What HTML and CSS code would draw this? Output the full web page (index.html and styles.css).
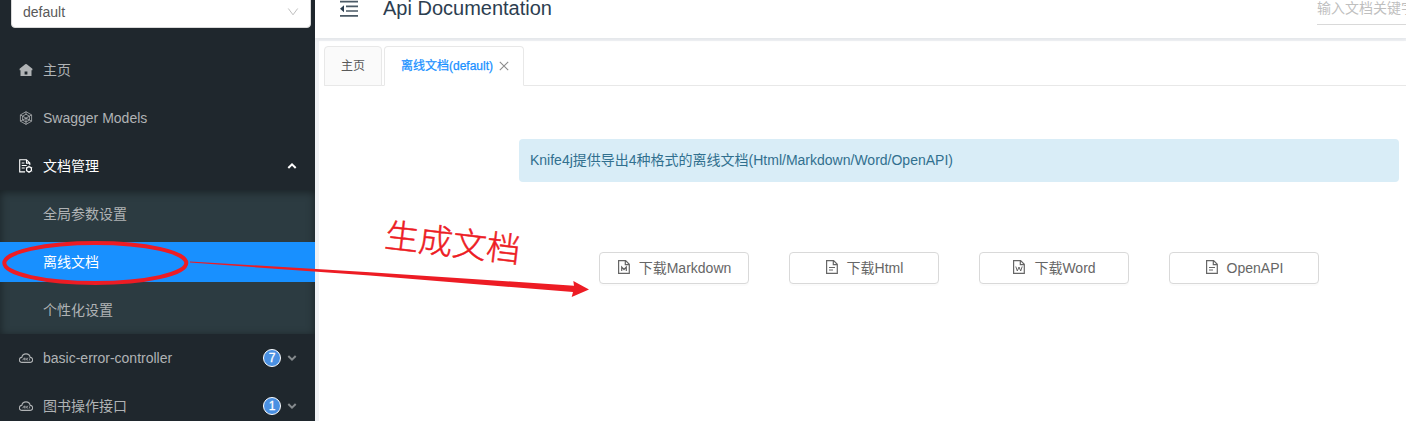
FILE: index.html
```html
<!DOCTYPE html>
<html lang="zh-CN">
<head>
<meta charset="utf-8">
<title>Api Documentation</title>
<link rel="stylesheet" href="styles.css">
</head>
<body>
<svg class="defs" width="0" height="0">
  <symbol id="cloud" viewBox="0 0 14 14"><path d="M3 11.400a2.500 2.500 0 0 1-.2-5C3.200 4 4.900 2.900 7 2.900s3.800 1.100 4.200 3.500a2.500 2.500 0 0 1-.2 5z" fill="none" stroke="currentColor" stroke-width="1.100"/><path d="M3.600 9.200l1.800-2.400v2.600M6.900 6.800v2.600M9.200 6.900 7.300 8.200l1.900 1.200M10.600 7.400v2" fill="none" stroke="currentColor" stroke-width=".8"/></symbol>
  <symbol id="down" viewBox="0 0 10 8"><path d="M1.300 2 5 5.700 8.700 2" fill="none" stroke="currentColor" stroke-width="2"/></symbol>
  <symbol id="file" viewBox="0 0 14 16"><path d="M1.600 1.600h7l3.700 3.700v9.100H1.600zM8.300 1.600v4h4" fill="none" stroke="currentColor" stroke-width="1.200"/></symbol>
</svg>
<div class="layout">
  <aside class="sidebar">
    <div class="select"><span>default</span>
      <svg width="12" height="12" viewBox="0 0 12 12"><path d="M1.300 2.500 6 8.800l4.700-6.300" fill="none" stroke="#bfbfbf"/></svg>
    </div>
    <nav class="menu">
      <div class="item"><svg class="icon" viewBox="0 0 14 14"><path fill-rule="evenodd" d="M7 .9Q6.600.9 6.200 1.300L.6 5.800v1.400h.9V13h11V7.200h.9V5.800L7.800 1.300Q7.400.9 7 .9zM5.600 8.500h2.800v3H5.600z" fill="currentColor"/></svg><span>主页</span></div>
      <div class="item"><svg class="icon" viewBox="0 0 14 14"><path d="M7 .7l5.600 3.200v6.300L7 13.400l-5.600-3.200V3.900zM7 3.200l3.400 2v3.900L7 11 3.600 9.100V5.200zM7 .7v2.500M1.400 3.900l9 5.200M12.600 3.900l-9 5.200M7 6.900v6.500M3.600 9.100l-2.200 1.100M10.400 9.100l2.200 1.100" fill="none" stroke="currentColor" stroke-width=".8"/></svg><span>Swagger Models</span></div>
      <div class="item open"><svg class="icon" viewBox="0 0 14 14"><path d="M6 12.900H.7V.7h6.800l3.300 3.300v2M7.500.7v3.400h3.300M2.700 4h2.700M2.700 6.500h5M2.700 9h3" fill="none" stroke="currentColor" stroke-width="1.100"/><circle cx="10" cy="10.300" r="2.500" fill="none" stroke="currentColor" stroke-width="1.200"/><path d="M10 6.700v1.300M10 12.600v1.300M6.900 8.500l1.100.7M12 11.400l1.200.7M13.200 8.500l-1.200.7M8 11.400l-1.100.7" stroke="currentColor"/></svg><span>文档管理</span>
        <svg class="caret" viewBox="0 0 10 8"><path d="M1.300 6 5 2.300 8.700 6" fill="none" stroke="currentColor" stroke-width="2"/></svg></div>
      <div class="submenu">
        <div class="item">全局参数设置</div>
        <div class="item selected">离线文档</div>
        <div class="item">个性化设置</div>
      </div>
      <div class="item"><svg class="icon"><use href="#cloud"/></svg><span>basic-error-controller</span><b class="badge">7</b><svg class="caret dim"><use href="#down"/></svg></div>
      <div class="item"><svg class="icon"><use href="#cloud"/></svg><span>图书操作接口</span><b class="badge">1</b><svg class="caret dim"><use href="#down"/></svg></div>
    </nav>
  </aside>
  <main class="main">
    <header class="header">
      <svg class="fold" width="18" height="18" viewBox="0 0 18 18"><path d="M0 2.700h18M6 7.400h12M6 12h12M0 16.800h18" stroke="#4b5a66" stroke-width="1.700"/><path d="M0 9.700l4-3.500v7z" fill="#2c3e50"/></svg>
      <h1>Api Documentation</h1>
      <div class="search">输入文档关键字</div>
    </header>
    <section class="content">
      <div class="tabs">
        <div class="tab">主页</div>
        <div class="tab active"><span>离线文档(default)</span><svg width="10" height="10" viewBox="0 0 10 10"><path d="M.8.8l8.400 8.400M9.200.8.800 9.200" stroke="#8c8c8c" stroke-width="1.100"/></svg></div>
      </div>
      <div class="panel">
        <div class="notice">Knife4j提供导出4种格式的离线文档(Html/Markdown/Word/OpenAPI)</div>
        <div class="buttons">
          <button><svg viewBox="0 0 14 16"><use href="#file"/><path d="M4.700 12V8l2.300 2.500L9.300 8v4" fill="none" stroke="currentColor" stroke-width="1.200"/></svg>下载Markdown</button>
          <button><svg viewBox="0 0 14 16"><use href="#file"/><path d="M4 8.500h6M4 11h4" stroke="currentColor"/></svg>下载Html</button>
          <button><svg viewBox="0 0 14 16"><use href="#file"/><path d="M3.800 7.500 5.300 12 7 8l1.700 4 1.500-4.500" fill="none" stroke="currentColor"/></svg>下载Word</button>
          <button><svg viewBox="0 0 14 16"><use href="#file"/><path d="M4 8.500h6M4 11h4" stroke="currentColor"/></svg>OpenAPI</button>
        </div>
      </div>
    </section>
  </main>
</div>
<svg class="marks" width="1406" height="421" viewBox="0 0 1406 421">
  <ellipse cx="95.300" cy="263" rx="91" ry="20" fill="none" stroke="#ed1c24" stroke-width="4"/>
  <path d="M190 261.500 370 272.300 574 285.700 573.300 281 589 289.500 571.700 297 573 292 370 275.600 190 262.500z" fill="#ed1c24"/>
</svg>
<div class="handnote">生成文档</div>
</body>
</html>
```
FILE: styles.css
```css
* { box-sizing: border-box; }
body {
  margin: 0;
  height: 421px;
  overflow: hidden;
  position: relative;
  font: 14px/22px "Liberation Sans", "Noto Sans CJK SC", sans-serif;
  color: #595959;
}
.defs { position: absolute; }
.layout { display: flex; height: 421px; }
.sidebar { width: 315px; flex: none; background: #1f272d; color: #b0b3b5; overflow: hidden; }
.select {
  display: flex; align-items: center; justify-content: space-between;
  width: 300px; height: 32px; margin: -4px 0 0 11px; padding: 0 11px;
  border: 1px solid #d9d9d9; border-radius: 4px; background: #fff; color: #595959;
}
.menu { padding-top: 18px; }
.item { display: flex; align-items: center; height: 40px; margin: 4px 0 8px; padding: 0 18px 0 19px; white-space: nowrap; }
.icon { width: 14px; height: 14px; margin-right: 10px; flex: none; }
.open { color: #fff; margin-bottom: 4px; }
.caret { width: 10px; height: 8px; margin-left: auto; }
.badge {
  width: 18px; height: 18px; margin-left: auto; border-radius: 50%;
  border: 1px solid #fff; background: #4a90e2; color: #fff;
  font-size: 12px; line-height: 16px; text-align: center; font-weight: 400;
  -webkit-text-stroke: .3px;
}
.badge + .caret { margin-left: 6px; color: #858a8d; }
.submenu { height: 144px; padding-top: 4px; margin-bottom: 4px; background: #2c3b41; box-shadow: inset 0 2px 8px rgba(0,0,0,.45); }
.submenu .item { padding-left: 43px; margin: 0 0 8px; }
.submenu .selected { background: #1890ff; color: #fff; }
.main { flex: 1; min-width: 0; background: #f0f2f5; }
.header {
  display: flex; height: 38px; position: relative;
  background: #fff; box-shadow: 0 1px 4px rgba(0,21,41,.08);
}
.fold { margin: -1px 0 0 25px; flex: none; }
h1 { margin: -6px 0 0 25px; height: 28px; font-size: 20px; line-height: 28px; font-weight: 400; color: #2c3e50; white-space: nowrap; }
.search { width: 89px; height: 28px; margin: -3px 0 0 auto; flex: none; border-bottom: 1px solid #d9d9d9; color: #bfbfbf; white-space: nowrap; overflow: hidden; }
.content { margin: 3px 0 0 4px; height: 380px; background: #fff; }
.tabs { display: flex; gap: 2px; height: 45px; padding: 5px 0 0 5px; background: linear-gradient(#e8e8e8,#e8e8e8) 5px 44px / 100% 1px no-repeat; }
.tab { display: flex; align-items: center; height: 40px; padding: 0 16px; border: 1px solid #e8e8e8; border-radius: 4px 4px 0 0; background: #fafafa; font-size: 12px; white-space: nowrap; }
.active { width: 140px; background: #fff; border-bottom-color: #fff; color: #1890ff; -webkit-text-stroke: .25px; }
.active svg { margin-left: 6px; flex: none; }
.panel { padding: 53px 7px 0 200px; }
.notice { height: 43px; padding: 0 11px; border-radius: 4px; background: #d9edf7; color: #31708f; line-height: 43px; }
.buttons { display: flex; gap: 40px; padding: 70px 0 0 80px; }
button {
  display: flex; align-items: center; justify-content: center;
  width: 150px; height: 32px; padding: 0; border: 1px solid #d9d9d9; border-radius: 4px;
  background: #fff; color: #666; font: inherit; box-shadow: 0 2px 0 rgba(0,0,0,.015);
}
button svg { width: 14px; height: 16px; margin: 0 8px 2px 0; }
.marks { position: absolute; left: 0; top: 0; }
.handnote {
  position: absolute; left: 385px; top: 219px; width: 136px;
  font-family: "Noto Sans CJK SC", sans-serif; font-size: 34px; line-height: 44px; font-weight: 300;
  -webkit-text-stroke: .5px; color: #ed1c24; white-space: nowrap; transform: rotate(6.7deg);
}
```
